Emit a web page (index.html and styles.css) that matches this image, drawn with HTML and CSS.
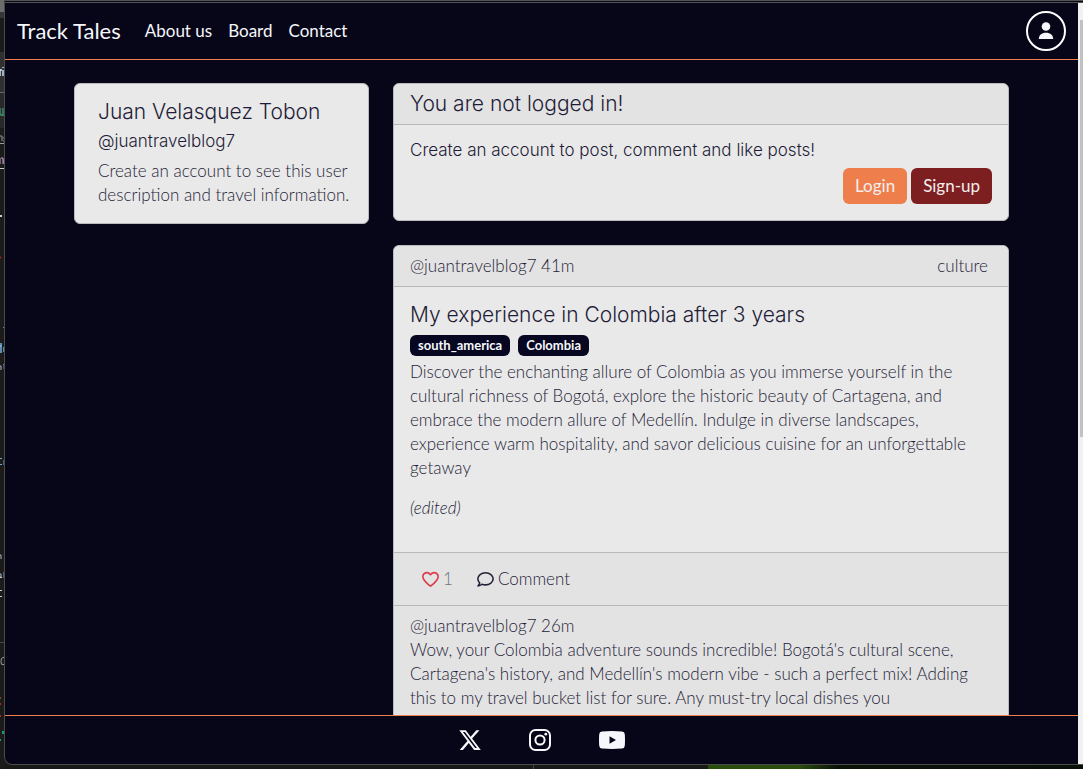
FILE: index.html
```html
<!DOCTYPE html>
<html lang="en">
<head>
<meta charset="utf-8">
<meta name="viewport" content="width=device-width, initial-scale=1">
<title>Track Tales</title>
<link rel="stylesheet" href="styles.css">
</head>
<body>
<div class="desktop">
  <svg class="desktop-edge" viewBox="0 0 5 769" preserveAspectRatio="none" aria-hidden="true">
    <rect width="5" height="769" fill="#1b1b19"/>
    <rect width="5" height="12" fill="#6c6c6c"/><rect y="12" width="5" height="6" fill="#353535"/>
    <rect y="52" width="5" height="40" fill="#303030"/><rect y="92" width="5" height="1" fill="#666"/>
    <rect y="93" width="5" height="35" fill="#292929"/>
    <path d="M0 69v7M0 70h2M3 67v1M3 70v6" stroke="#cde" stroke-width="1.5" fill="none"/>
    <path d="M0 108v6q3 3 3-1v-5v8" stroke="#3b9b72" stroke-width="1.3" fill="none"/>
    <path d="M0 136h2v5M3 138h2M3 141h2M0 143.500h4" stroke="#999" fill="none"/>
    <path d="M0 158v6M1 158h2v6M4 159v5" stroke="#c6a5c9" fill="none"/>
    <path d="M0 168.500h5" stroke="#ccc"/><path d="M0 216h2" stroke="#ccc" stroke-width="2"/>
    <path d="M0 257.500h1M0 704h1M0 716h1" stroke="#b22" stroke-width="2"/>
    <path d="M3 327.500h2M3 364.500h2M4 364v5" stroke="#77a" fill="none"/>
    <path d="M1 343v10M0 346h2M4 347v5" stroke="#78b4dd" stroke-width="1.500" fill="none"/>
    <path d="M0 366h1v4M0 555h1v4M0 574h1v3h-1" stroke="#aab9c0" fill="none"/>
    <path d="M0 458.500h2M0 464.500h2M4 460v5M4 572v6" stroke="#79a3ca" fill="none"/>
    <path d="M0 577.500h2M0 590.500h2M0 596.500h2" stroke="#ccc"/>
    <path d="M0 642.500h5" stroke="#444"/><path d="M5 657.500H3q-2 0-2 4t2 3h2" stroke="#999" fill="none"/>
    <path d="M0 698h1" stroke="#c80" stroke-width="1"/><path d="M3 731v3M0 740h1" stroke="#1a9a68" stroke-width="2"/>
  </svg>

  <div class="window">
    <div class="page">
      <header class="navbar">
        <a class="brand" href="#">Track Tales</a>
        <nav class="nav-links">
          <a href="#">About us</a>
          <a href="#">Board</a>
          <a href="#">Contact</a>
        </nav>
        <button class="avatar" type="button" aria-label="Account">
          <svg viewBox="0 0 16 18" width="16" height="18" aria-hidden="true"><circle cx="8" cy="4.500" r="4.300"/><path d="M.8 17c0-4 2.800-6.300 7.200-6.300s7.200 2.300 7.200 6.300z"/></svg>
        </button>
      </header>

      <main class="content">
        <div class="container">
          <aside class="profile card">
            <h1 class="title">Juan Velasquez Tobon</h1>
            <h2 class="subtitle">@juantravelblog7</h2>
            <p class="text">Create an account to see this user description and travel information.</p>
          </aside>

          <div class="feed">
            <section class="card">
              <div class="card-header"><h2 class="login-title">You are not logged in!</h2></div>
              <div class="card-body">
                <h3 class="subtitle">Create an account to post, comment and like posts!</h3>
                <div class="actions">
                  <button class="btn btn-login" type="button">Login</button>
                  <button class="btn btn-signup" type="button">Sign-up</button>
                </div>
              </div>
            </section>

            <article class="card">
              <div class="card-header post-meta"><span>@juantravelblog7 41m</span><span class="category">culture</span></div>
              <div class="card-body">
                <h2 class="title">My experience in Colombia after 3 years</h2>
                <div class="badges"><span class="badge">south_america</span><span class="badge">Colombia</span></div>
                <p class="text">Discover the enchanting allure of Colombia as you immerse yourself in the cultural richness of Bogotá, explore the historic beauty of Cartagena, and embrace the modern allure of Medellín. Indulge in diverse landscapes, experience warm hospitality, and savor delicious cuisine for an unforgettable getaway</p>
                <p class="text edited"><em>(edited)</em></p>
              </div>
              <div class="card-footer">
                <button class="btn like" type="button" aria-label="Like, 1">
                  <svg viewBox="0 0 16 16" width="17" height="17" aria-hidden="true"><path d="M8 14.300C5 11.900 1 9 .8 5.500.7 1.600 5.400.1 8 3.500c2.600-3.400 7.300-1.900 7.200 2C15 9 11 11.900 8 14.300z"/></svg>
                  <span>1</span>
                </button>
                <button class="btn comment-btn" type="button">
                  <svg viewBox="0 0 16 16" width="17" height="17" aria-hidden="true"><path d="M.9 14.100c1-1 1.500-1.900 1.600-2.900C1.300 10.100.8 8.800.8 7.400.8 4.100 4 1.700 8 1.700s7.200 2.400 7.200 5.700S12 13.100 8 13.100c-1.200 0-2.300-.2-3.300-.6-1 .9-2.300 1.500-3.800 1.600z"/></svg>
                  <span>Comment</span>
                </button>
              </div>
              <div class="comment">
                <p class="text">@juantravelblog7 26m</p>
                <p class="text">Wow, your Colombia adventure sounds incredible! Bogotá's cultural scene, Cartagena's history, and Medellín's modern vibe - such a perfect mix! Adding this to my travel bucket list for sure. Any must-try local dishes you</p>
              </div>
            </article>
          </div>
        </div>
      </main>

      <footer class="footer">
        <a href="#" aria-label="X"><svg viewBox="0 0 22 20" width="22" height="20"><path fill-rule="evenodd" d="M.3.300h6.500l4.800 6.400L17.300.300h3.200l-7.400 8.300 8.700 11.300h-6.700L9.800 13.100 3.900 19.900H.7l7.700-9L.3.300zm3.600 1.800 12.200 16h1.900L5.900 2.100z"/></svg></a>
        <a href="#" aria-label="Instagram"><svg viewBox="0 0 22 22" width="22" height="22"><g fill="none" stroke="currentColor" stroke-width="2"><rect x="1" y="1" width="20" height="20" rx="5.500"/><circle cx="11" cy="11" r="4.600"/></g><circle cx="16.800" cy="5.200" r="1.400"/></svg></a>
        <a href="#" aria-label="YouTube"><svg viewBox="0 0 26 18" width="26" height="18"><path fill-rule="evenodd" d="M3 .4Q13-.4 23 .4q2.600.2 2.800 2.800.4 5.800 0 11.600-.2 2.600-2.800 2.800-10 .8-20 0Q.400 17.400.2 14.800-.2 9 .2 3.200.400.600 3 .4zM10.500 5.200v7.600L17 9z"/></svg></a>
      </footer>
    </div>
    <div class="scrollbar" aria-hidden="true"><div class="thumb"></div></div>
  </div>
</div>
</body>
</html>
```

FILE: styles.css
```css
* { box-sizing: border-box; }

body {
  margin: 0;
  background: #191a18;
  color: #1f1d38;
  font: 300 17px/24px Lato, "Open Sans", sans-serif;
}

h1, h2, h3, p { margin: 0; }
a { color: inherit; text-decoration: none; }
button { font: inherit; cursor: pointer; }

.desktop {
  display: grid;
  grid-template-columns: 4px minmax(0, 1fr);
  grid-template-rows: minmax(0, 1fr);
  height: 100vh;
  overflow: hidden;
  padding-bottom: 4px;
  background:
    linear-gradient(90deg, #294d0a 0, #2b4d0c 90px, #0a1208 130px, #050705 100%) 708px 100% / 100% 4px no-repeat,
    linear-gradient(#444, #444) 533px 100% / 1px 4px no-repeat,
    #191a18;
}

.desktop-edge {
  width: 5px;
  height: 100vh;
}

.window {
  position: relative;
  display: flex;
  min-width: 0;
  min-height: 0;
  overflow: hidden;
  border: 1px solid #4b4b4b;
  border-right: 0;
  border-top: 3px double #555;
  border-radius: 0 0 0 8px;
  background: #070618;
}

.page {
  display: flex;
  flex: 1;
  flex-direction: column;
  min-width: 0;
}

.scrollbar {
  width: 5px;
  padding: 17px 0 0 2px;
  background: #f1f1f1;
}

.thumb {
  height: 56%;
  background: #c1c1c1;
}

.navbar {
  display: flex;
  align-items: center;
  padding: 8px 12px;
  border-bottom: 1px solid #ee7f4d;
  color: #f5f7fb;
  font-weight: 400;
}

.brand {
  margin-right: 24px;
  font-size: 22px;
}

.nav-links {
  display: flex;
  flex: 1;
  gap: 16px;
}

.avatar {
  display: grid;
  place-items: center;
  width: 40px;
  height: 40px;
  padding: 0;
  border: 2px solid #fff;
  border-radius: 50%;
  background: transparent;
}

.avatar svg, .footer svg { display: block; fill: #f5f7fb; }

.content {
  flex: 1;
  min-height: 0;
  overflow: hidden;
}

.container {
  display: grid;
  grid-template-columns: 295fr 616fr;
  align-items: start;
  gap: 24px;
  max-width: 959px;
  margin: 0 auto;
  padding: 23px 12px;
}

.feed {
  display: grid;
  gap: 24px;
  min-width: 0;
}

.card {
  overflow: hidden;
  border: 1px solid #bbbbbd;
  border-radius: 6px;
  background: #e9e9e9;
}

.profile { padding: 16px 8px 16px 23px; }

.card-header {
  padding: 8px 16px;
  border-bottom: 1px solid #b8b8ba;
  background: #e3e3e3;
}

.card-body { padding: 16px; }

.title, .login-title {
  font: 300 21px/24px Inter, sans-serif;
}

.title { margin-bottom: 8px; }

.subtitle {
  margin-bottom: 8px;
  font: 300 17px/19px Inter, sans-serif;
}

.actions {
  display: flex;
  justify-content: flex-end;
  gap: 4px;
}

.btn {
  display: inline-flex;
  align-items: center;
  justify-content: center;
  gap: 4px;
  height: 36px;
  padding: 0 12px;
  border: 0;
  border-radius: 6px;
  background: transparent;
  color: inherit;
}

.btn-login, .btn-signup {
  color: #f5eeee;
  font-weight: 400;
}

.btn-login { background: #ee7f4d; }
.btn-signup { background: #7d1e20; }

.post-meta {
  display: flex;
  justify-content: space-between;
}

.category { padding-right: 4px; }

.badges {
  display: flex;
  gap: 8px;
  margin-bottom: 4px;
}

.badge {
  padding: 0 8px;
  border-radius: 6px;
  background: #080721;
  color: #f5f7fb;
  font-size: 13px;
  font-weight: 700;
  line-height: 21px;
}

.edited { margin: 16px 0; }

.card-footer {
  display: flex;
  padding: 8px 16px;
  border-top: 1px solid #b8b8ba;
  border-bottom: 1px solid #b8b8ba;
  background: #e3e3e3;
}

.like { color: #6c757d; }

.btn svg {
  fill: none;
  stroke: #242239;
  stroke-width: 1.500;
  stroke-linejoin: round;
}

.like svg { stroke: #dc3c4c; }

.comment {
  padding: 8px 16px 32px;
  background: #e3e3e3;
}

.footer {
  display: flex;
  align-items: center;
  justify-content: center;
  gap: 48px;
  height: 49px;
  border-top: 1px solid #ee7f4d;
  color: #f5f7fb;
}
```
